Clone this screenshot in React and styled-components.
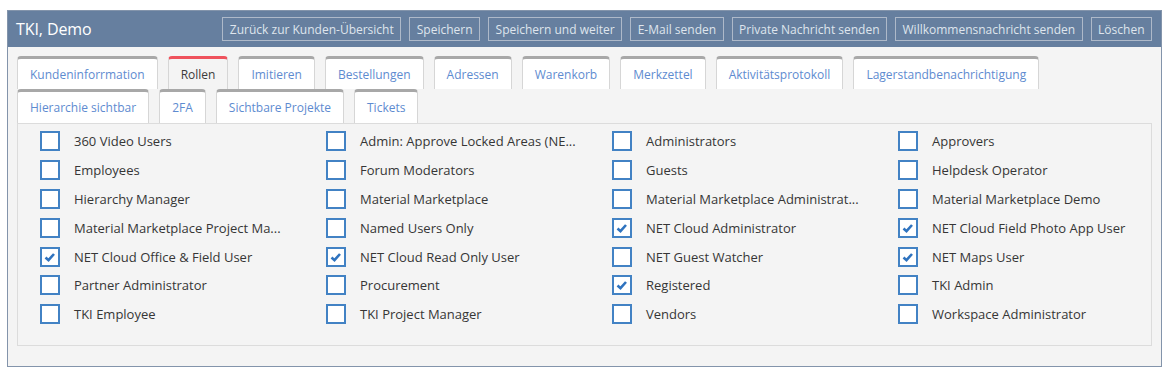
import React from "react";
import styled, { createGlobalStyle } from "styled-components";

const Global = createGlobalStyle`
  html, body { margin: 0; padding: 0; background: #ffffff; }
  body { font-family: "Open Sans", "Liberation Sans", sans-serif; }
  * { box-sizing: border-box; }
`;

const Page = styled.div`
  padding: 10px 0 0 7px;
`;

const Panel = styled.div`
  width: 1155px;
  height: 357px;
  border: 1px solid #8394ab;
  background: #f4f4f4;
  display: flex;
  flex-direction: column;
`;

const Header = styled.div`
  height: 36px;
  background: #667f9f;
  display: flex;
  align-items: center;
  justify-content: space-between;
  padding: 0 9px 0 8px;
`;

const Title = styled.div`
  color: #ffffff;
  font-size: 16px;
  letter-spacing: -0.1px;
`;

const Actions = styled.div`
  display: flex;
  gap: 8px;
`;

const HeaderButton = styled.button`
  height: 24px;
  padding: 0 6.5px;
  border: 1px solid #aeb9c9;
  background: transparent;
  color: #dfe5ed;
  font-family: "Open Sans", "Liberation Sans", sans-serif;
  font-size: 12px;
  cursor: pointer;
  white-space: nowrap;
`;

const Body = styled.div`
  padding: 9px 9px 0 9px;
`;

const TabRow = styled.div`
  display: flex;
  flex-wrap: wrap;
  column-gap: 10px;
`;

const Tab = styled.div`
  height: ${(p) => (p.$row === 2 ? 34 : 33)}px;
  padding: 0 12px;
  display: flex;
  align-items: center;
  background: ${(p) => (p.$active ? "#f4f4f4" : "#ffffff")};
  border-top: 3px solid ${(p) => (p.$active ? "#ef535d" : "#a8a8a8")};
  border-left: 1px solid #d6d6d6;
  border-right: 1px solid #d6d6d6;
  border-radius: 4px 4px 0 0;
  color: ${(p) => (p.$active ? "#3c3c3c" : "#5e8bd0")};
  font-size: 12px;
  white-space: nowrap;
`;

const Content = styled.div`
  border: 1px solid #dcdcdc;
  padding: 3px 0 16px 22px;
  display: grid;
  grid-template-columns: repeat(4, 286px);
  grid-auto-rows: 28.8px;
`;

const RoleItem = styled.label`
  display: flex;
  align-items: center;
  gap: 14px;
  cursor: pointer;
`;

const Box = styled.span`
  width: 20px;
  height: 20px;
  flex: none;
  border: 2px solid #4282c4;
  background: #ffffff;
  display: flex;
  align-items: center;
  justify-content: center;
`;

const RoleText = styled.span`
  color: #363636;
  font-size: 13px;
  white-space: nowrap;
`;

const Check = () => (
  <svg width="16" height="16" viewBox="0 0 16 16">
    <polyline
      points="3.5,8.5 6.5,11.2 12,5"
      fill="none"
      stroke="#2f73bf"
      strokeWidth="2.6"
      strokeLinejoin="miter"
    />
  </svg>
);

const buttons = [
  "Zurück zur Kunden-Übersicht",
  "Speichern",
  "Speichern und weiter",
  "E-Mail senden",
  "Private Nachricht senden",
  "Willkommensnachricht senden",
  "Löschen",
];

const tabs1 = [
  "Kundeninforrmation",
  "Rollen",
  "Imitieren",
  "Bestellungen",
  "Adressen",
  "Warenkorb",
  "Merkzettel",
  "Aktivitätsprotokoll",
  "Lagerstandbenachrichtigung",
];
const tabs2 = ["Hierarchie sichtbar", "2FA", "Sichtbare Projekte", "Tickets"];

const roles = [
  ["360 Video Users", false],
  ["Admin: Approve Locked Areas (NE...", false],
  ["Administrators", false],
  ["Approvers", false],
  ["Employees", false],
  ["Forum Moderators", false],
  ["Guests", false],
  ["Helpdesk Operator", false],
  ["Hierarchy Manager", false],
  ["Material Marketplace", false],
  ["Material Marketplace Administrat...", false],
  ["Material Marketplace Demo", false],
  ["Material Marketplace Project Ma...", false],
  ["Named Users Only", false],
  ["NET Cloud Administrator", true],
  ["NET Cloud Field Photo App User", true],
  ["NET Cloud Office & Field User", true],
  ["NET Cloud Read Only User", true],
  ["NET Guest Watcher", false],
  ["NET Maps User", true],
  ["Partner Administrator", false],
  ["Procurement", false],
  ["Registered", true],
  ["TKI Admin", false],
  ["TKI Employee", false],
  ["TKI Project Manager", false],
  ["Vendors", false],
  ["Workspace Administrator", false],
];

export default function App() {
  return (
    <>
      <Global />
      <Page>
        <Panel>
          <Header>
            <Title>TKI, Demo</Title>
            <Actions>
              {buttons.map((b) => (
                <HeaderButton key={b}>{b}</HeaderButton>
              ))}
            </Actions>
          </Header>
          <Body>
            <TabRow>
              {tabs1.map((t) => (
                <Tab key={t} $row={1} $active={t === "Rollen"}>
                  {t}
                </Tab>
              ))}
            </TabRow>
            <TabRow>
              {tabs2.map((t) => (
                <Tab key={t} $row={2}>
                  {t}
                </Tab>
              ))}
            </TabRow>
            <Content>
              {roles.map(([name, checked]) => (
                <RoleItem key={name}>
                  <Box>{checked && <Check />}</Box>
                  <RoleText>{name}</RoleText>
                </RoleItem>
              ))}
            </Content>
          </Body>
        </Panel>
      </Page>
    </>
  );
}
